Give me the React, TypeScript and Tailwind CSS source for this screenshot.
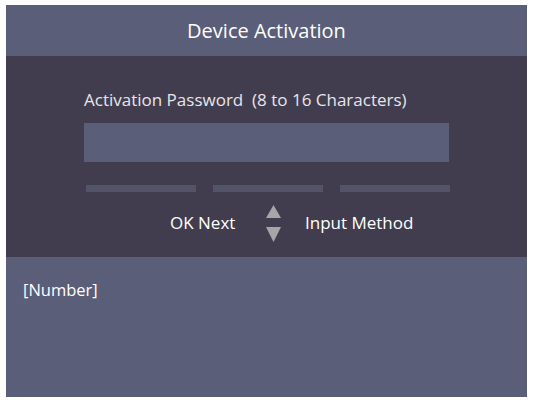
import React from "react";

export default function App() {
  return (
    <div className="w-[538px] h-[400px] bg-white pt-[5px] pl-[6px]" style={{ fontFamily: '"Open Sans", "Liberation Sans", sans-serif' }}>
      <div className="w-[521px] h-[392px] flex flex-col">
        <div className="h-[51px] bg-[#5a5e78] flex items-center justify-center text-white text-[20px]">
          Device Activation
        </div>
        <div className="h-[201px] bg-[#413d4f] flex flex-col pl-[78px]">
          <div className="mt-[30px] h-[28px] flex items-center text-[#e6e6ea] text-[17px]">
            Activation Password&nbsp;&nbsp;(8 to 16 Characters)
          </div>
          <div className="mt-[9px] w-[365px] h-[39px] bg-[#5a5e78]" />
          <div className="mt-[23px] ml-[2px] flex gap-[17px]">
            <div className="w-[110px] h-[7px] bg-[#545468]" />
            <div className="w-[110px] h-[7px] bg-[#545468]" />
            <div className="w-[110px] h-[7px] bg-[#545468]" />
          </div>
          <div className="mt-[13px] flex items-center text-white text-[17px] leading-[37px]">
            <span className="ml-[86px] w-[64px] whitespace-nowrap -translate-y-[1px]">OK Next</span>
            <svg className="ml-[32px]" width="15" height="37" viewBox="0 0 15 37">
              <polygon points="7.5,0 15,13 0,13" fill="#a5a5aa" />
              <polygon points="0,22 15,22 7.5,37" fill="#a5a5aa" />
            </svg>
            <span className="ml-[24px] whitespace-nowrap -translate-y-[1px]">Input Method</span>
          </div>
        </div>
        <div className="flex-1 bg-[#5a5e78] pl-[17px] pt-[21px] text-white text-[16.5px]">
          [Number]
        </div>
      </div>
    </div>
  );
}
